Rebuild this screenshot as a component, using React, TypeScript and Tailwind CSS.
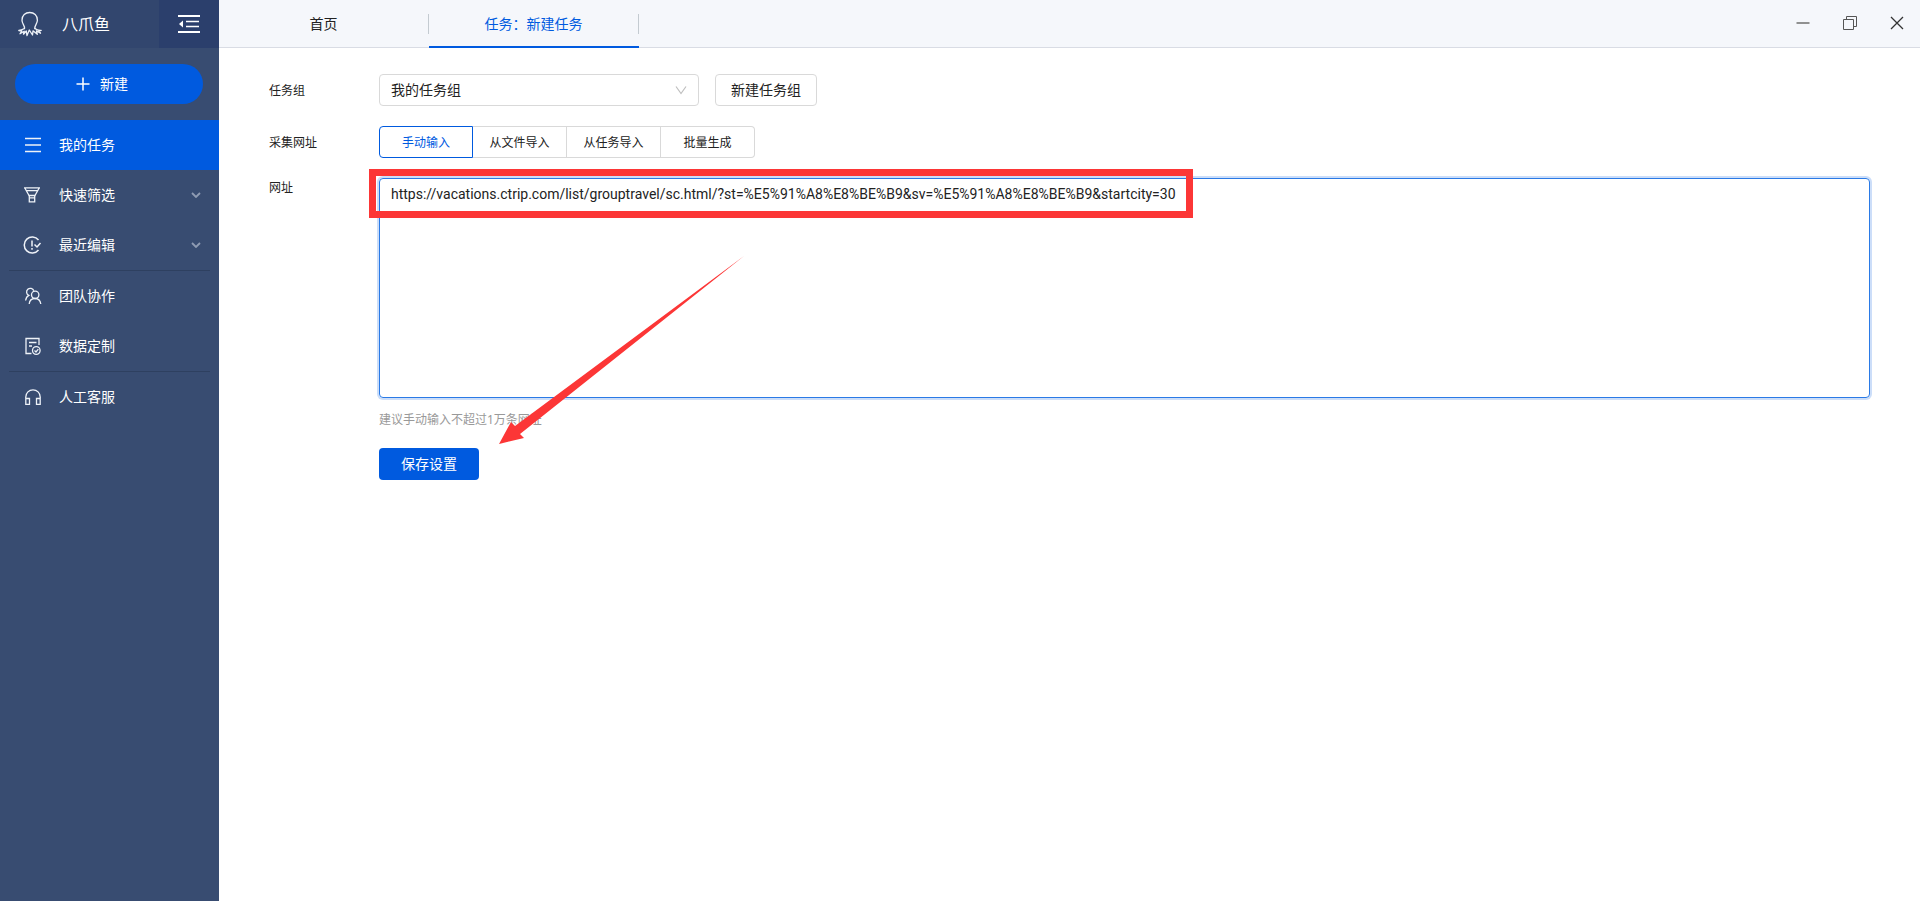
import { useState } from "react";
import type { ReactNode } from "react";

const FONT = "font-['Noto_Sans','Noto_Sans_CJK_SC',sans-serif]";
const LABEL = "text-xs font-['Noto_Sans_CJK_SC',sans-serif]";

const URL_TEXT =
  "https://vacations.ctrip.com/list/grouptravel/sc.html/?st=%E5%91%A8%E8%BE%B9&sv=%E5%91%A8%E8%BE%B9&startcity=30";

type MenuItem = {
  title: string;
  icon: ReactNode;
  active?: boolean;
  expandable?: boolean;
};

const groups: MenuItem[][] = [
  [
    {
      title: "我的任务",
      active: true,
      icon: <path d="M1 2.500H17M1 9H17M1 15.500H17" strokeWidth="1.6" />,
    },
    {
      title: "快速筛选",
      expandable: true,
      icon: (
        <>
          <path d="M0 1.800H16M2.500 4.700H13.500M0.800 2L5.300 10M15.200 2L10.700 10" />
          <path d="M5.300 9.500H10.700V15.800H5.300ZM5.300 11.800H10.700" />
        </>
      ),
    },
    {
      title: "最近编辑",
      expandable: true,
      icon: (
        <>
          <path d="M14.500 4A8 8 0 1 0 14.500 14" strokeWidth="1.5" />
          <path d="M8 4.500V10.500M8 12V13.800" strokeWidth="1.5" />
          <path d="M10.500 8.500L13 11L16.500 7" strokeWidth="1.5" />
        </>
      ),
    },
  ],
  [
    {
      title: "团队协作",
      icon: (
        <>
          <path d="M9.800 3.800A3.700 3.700 0 1 0 4.800 8.400C3 9.300 2 11 1.600 13.500" />
          <circle cx="11.200" cy="7.800" r="3.700" />
          <path d="M5.200 17C5.500 13.500 7.800 11.500 11 11.500S16.300 13.500 16.800 17" />
        </>
      ),
    },
    {
      title: "数据定制",
      icon: (
        <>
          <path d="M7.500 16.500H2V1.500H15V8M5 5.500H12.500M5 9H8" />
          <circle cx="12.300" cy="13.500" r="3.800" />
          <path d="M10.500 13.500L12 15L14.300 12.200" />
        </>
      ),
    },
  ],
  [
    {
      title: "人工客服",
      icon: (
        <>
          <path d="M1.800 10V9A7.200 7.200 0 0 1 16.200 9V10" />
          <path d="M1.800 10.500H5.500V16.300H1.800ZM12.500 10.500H16.200V16.300H12.500Z" />
        </>
      ),
    },
  ],
];

const modes = ["手动输入", "从文件导入", "从任务导入", "批量生成"];

function Octopus() {
  return (
    <svg width="24" height="26" viewBox="0 0 24 26" fill="none" stroke="#eef2f8" strokeWidth="1.3" strokeLinejoin="round" strokeLinecap="round">
      <path d="M6.500 17.500C7 14.500 4 13 4 9.200C4 4.500 7.300 1.500 11.700 1.500S19.400 4.500 19.400 9.200C19.400 13 16.300 14.500 16.900 17.500" />
      <path d="M6.500 17.500C5 18.300 3 19.300 0.800 19.500L3.800 20L2 22.800L6.200 20.300L5.500 23.200L8.300 20L9 24.600L11.300 19L14.500 24L15 19.800L19.300 23.300L18.500 20L22.500 22.200L20.800 19.800L23.200 19.300C20.500 19.500 18.500 18.800 16.900 17.500" />
    </svg>
  );
}

function Sidebar() {
  return (
    <aside className="flex w-[219px] shrink-0 flex-col bg-[#384c71] text-white">
      <div className="flex h-12">
        <div className="flex flex-1 items-center gap-5 bg-[#32466e] pl-[18px]">
          <Octopus />
          <span className="text-base">八爪鱼</span>
        </div>
        <button aria-label="收起菜单" className="flex w-[60px] items-center justify-center bg-[#2b3f6c]">
          <svg width="22" height="20" viewBox="0 0 22 20" fill="none" stroke="white">
            <path d="M0 2H22M0 18H22" strokeWidth="2" />
            <path d="M8 7.500H21M8 12.500H21" strokeWidth="1.6" />
            <path d="M5 6.500V13.500L1 10Z" fill="white" stroke="none" />
          </svg>
        </button>
      </div>

      <div className="py-4 pr-4 pl-[15px]">
        <button className="flex h-10 w-full items-center justify-center gap-2.5 rounded-full bg-[#005adf] pr-3.5 text-sm">
          <svg width="14" height="14" viewBox="0 0 14 14" stroke="white" strokeWidth="1.5">
            <path d="M7 0.500V13.500M0.500 7H13.500" />
          </svg>
          新建
        </button>
      </div>

      <nav>
        {groups.map((items, i) => (
          <div key={i}>
            {i > 0 && <hr className="mx-[9px] border-[#2e4060]" />}
            {items.map((item) => (
              <a
                key={item.title}
                href="#"
                className={`flex h-[50px] items-center pr-[18px] pl-6 text-sm ${item.active ? "bg-[#005adf]" : ""}`}
              >
                <svg className="overflow-visible" width="18" height="18" viewBox="0 0 18 18" fill="none" stroke="#eef2f8" strokeWidth="1.3">
                  {item.icon}
                </svg>
                <span className="ml-[17px] flex-1">{item.title}</span>
                {item.expandable && (
                  <svg width="10" height="6" viewBox="0 0 10 6" fill="none" stroke="#8f9cb3" strokeWidth="1.8">
                    <path d="M1 1L5 5L9 1" />
                  </svg>
                )}
              </a>
            ))}
          </div>
        ))}
      </nav>
    </aside>
  );
}

function TitleBar() {
  return (
    <header className="flex h-12 border-b border-[#d9dce4] bg-[#f5f7fb] text-sm">
      <div role="tablist" className="flex">
        <button role="tab" className="flex w-[210px] items-center">
          <span className="flex-1">首页</span>
          <span className="h-5 w-px bg-[#c4cbd1]" />
        </button>
        <button role="tab" aria-selected className="-mb-px flex w-[210px] items-center border-b-2 border-[#005adf] pt-0.5 text-[#005adf]">
          <span className="flex-1">任务：新建任务</span>
          <span className="h-5 w-px bg-[#c4cbd1]" />
        </button>
      </div>
      <div className="ml-auto flex items-center gap-[33px] pr-4 pb-0.5">
        <button aria-label="最小化">
          <svg width="14" height="14" viewBox="0 0 14 14" stroke="#777" strokeWidth="1.6">
            <path d="M0.500 7H13.500" />
          </svg>
        </button>
        <button aria-label="还原">
          <svg width="14" height="14" viewBox="0 0 14 14" fill="none" stroke="#555">
            <path d="M0.500 3.500H10.500V13.500H0.500ZM3.500 3.500V0.500H13.500V10.500H10.500" />
          </svg>
        </button>
        <button aria-label="关闭">
          <svg width="14" height="14" viewBox="0 0 14 14" stroke="#333" strokeWidth="1.3">
            <path d="M1 1L13 13M13 1L1 13" />
          </svg>
        </button>
      </div>
    </header>
  );
}

// Red box and arrow pointing at the save button
function Highlight() {
  return (
    <>
      <div className="pointer-events-none absolute -top-[9px] -left-[10px] h-[49px] w-[824px] border-7 border-[#fc3636]" />
      <svg className="pointer-events-none absolute top-[78px] left-[120px]" width="246" height="190" viewBox="0 0 246 190" fill="#fc3636">
        <path d="M245 0L16 170L12 166L0 188L25 182L21 178Z" />
      </svg>
    </>
  );
}

export default function App() {
  const [mode, setMode] = useState(modes[0]);
  const [url, setUrl] = useState(URL_TEXT);

  return (
    <div className={`flex min-h-screen bg-white text-[#222] ${FONT}`}>
      <Sidebar />
      <div className="flex min-w-0 flex-1 flex-col">
        <TitleBar />
        <main className="flex flex-col gap-5 px-[50px] pt-[26px]">
          <div className="flex items-center">
            <label htmlFor="group" className={`w-[110px] ${LABEL}`}>任务组</label>
            <div className="relative w-80">
              <select id="group" className="h-8 w-full appearance-none rounded border border-[#d9d9d9] bg-white px-[11px] text-sm">
                <option>我的任务组</option>
              </select>
              <svg className="pointer-events-none absolute top-3 right-3" width="12" height="9" viewBox="0 0 12 9" fill="none" stroke="#bfbfbf" strokeWidth="1.2">
                <path d="M1 0.500L6 7.500L11 0.500" />
              </svg>
            </div>
            <button className="ml-4 h-8 rounded border border-[#d9d9d9] px-[15px] text-sm">新建任务组</button>
          </div>

          <div role="radiogroup" aria-labelledby="mode-label" className="flex items-center">
            <span id="mode-label" className={`w-[110px] ${LABEL}`}>采集网址</span>
            <div className="flex">
              {modes.map((m) => (
                <label
                  key={m}
                  className={`relative flex h-8 w-[94px] items-center justify-center border border-l-0 first:rounded-l first:border-l last:rounded-r ${LABEL} ${
                    m === mode ? "border-[#005adf] text-[#005adf] not-first:shadow-[-1px_0_0_0_#005adf]" : "border-[#d9d9d9]"
                  }`}
                >
                  <input
                    type="radio"
                    name="mode"
                    className="absolute inset-0 appearance-none"
                    checked={m === mode}
                    onChange={() => setMode(m)}
                  />
                  {m}
                </label>
              ))}
            </div>
          </div>

          <div className="flex">
            <label htmlFor="url" className={`w-[110px] shrink-0 pt-px ${LABEL}`}>网址</label>
            <div className="relative flex-1">
              <textarea
                id="url"
                value={url}
                onChange={(e) => setUrl(e.target.value)}
                spellCheck={false}
                className="block h-[220px] w-full resize-none rounded border border-[#2a7ae6] px-[11px] py-[5px] font-[Roboto,'Noto_Sans_CJK_SC',sans-serif] text-sm shadow-[0_0_0_2px_#ccdef9] outline-none"
              />
              <p className="mt-3.5 text-xs text-[#999]">建议手动输入不超过1万条网址</p>
              <button className="mt-5 h-8 w-[100px] rounded bg-[#005adf] text-sm text-white">保存设置</button>
              <Highlight />
            </div>
          </div>
        </main>
      </div>
    </div>
  );
}
